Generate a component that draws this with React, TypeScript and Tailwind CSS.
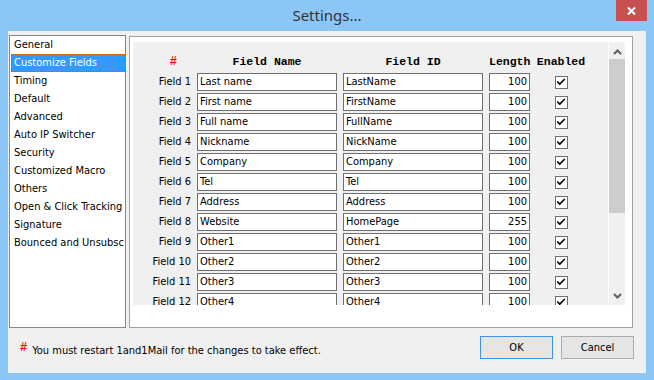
import { Check } from 'lucide-react'

const menu = [
  'General',
  'Customize Fields',
  'Timing',
  'Default',
  'Advanced',
  'Auto IP Switcher',
  'Security',
  'Customized Macro',
  'Others',
  'Open & Click Tracking',
  'Signature',
  'Bounced and Unsubscribe',
]

const fields = [
  ['Last name', 'LastName', '100'],
  ['First name', 'FirstName', '100'],
  ['Full name', 'FullName', '100'],
  ['Nickname', 'NickName', '100'],
  ['Company', 'Company', '100'],
  ['Tel', 'Tel', '100'],
  ['Address', 'Address', '100'],
  ['Website', 'HomePage', '255'],
  ['Other1', 'Other1', '100'],
  ['Other2', 'Other2', '100'],
  ['Other3', 'Other3', '100'],
  ['Other4', 'Other4', '100'],
]

const ui = "font-['DejaVu_Sans_Condensed','Liberation_Sans',sans-serif]"
const head = "font-['Liberation_Mono',monospace] font-bold text-[11.5px] text-black"

function Box({ value, right }: { value: string; right?: boolean }) {
  return (
    <div
      className={`h-[18px] border border-[#6f6f6f] bg-white px-[2px] text-[11px] leading-[16px] text-black whitespace-nowrap overflow-hidden ${
        right ? 'text-right' : ''
      }`}
    >
      {value}
    </div>
  )
}

export default function App() {
  return (
    <div className={`w-[654px] h-[380px] bg-[#8cc6f7] flex flex-col ${ui}`}>
      <div className="relative h-[31px] flex items-center justify-center">
        <span className="font-['Noto_Sans',sans-serif] text-[15px] text-[#333] -mt-[1px]">
          Settings...
        </span>
        <div className="absolute right-[7px] top-0 w-[31px] h-[21px] bg-[#c75050] flex items-center justify-center">
          <svg width="9" height="8" viewBox="0 0 9 8">
            <path d="M1 0.5 L8 7.5 M8 0.5 L1 7.5" stroke="white" strokeWidth="2" />
          </svg>
        </div>
      </div>

      <div className="mx-[8px] h-[342px] bg-[#f0f0f0] flex flex-col">
        <div className="flex pt-[4px] pl-[1px] gap-[3px]">
          <div className="w-[117px] h-[293px] bg-white border border-[#828790] pl-px overflow-hidden">
            {menu.map((m, i) => (
              <div
                key={m}
                className={`h-[18px] pl-[2px] text-[11px] leading-[16px] whitespace-nowrap overflow-hidden border ${
                  i === 1
                    ? 'bg-[#3399ff] text-white border-dotted border-[#c8620a]'
                    : 'text-black border-transparent'
                }`}
              >
                {m}
              </div>
            ))}
          </div>

          <div className="mt-[1px] w-[504px] h-[292px] bg-white border border-[#a0a0a0] pt-[5px] pl-[3px]">
            <div className="w-[492px] h-[263px] bg-[#f0f0f0] flex">
              <div className="flex-1 overflow-hidden pt-[10px]">
                <div className="flex items-center h-[19px] mb-[2px]">
                  <div className="w-[58px] text-right pr-[14px] text-[#ff0000] font-['Liberation_Mono',monospace] font-bold text-[12px]">
                    #
                  </div>
                  <div className={`ml-[6px] w-[140px] text-center ${head}`}>Field Name</div>
                  <div className={`ml-[6px] w-[140px] text-center ${head}`}>Field ID</div>
                  <div className={`ml-[6px] w-[41px] text-center ${head}`}>Length</div>
                  <div className={`ml-[2px] w-[58px] text-center ${head}`}>Enabled</div>
                </div>
                {fields.map((f, i) => (
                  <div key={i} className="flex items-center h-[18px] mb-[2px]">
                    <div className="w-[58px] text-right text-[11px] text-black whitespace-nowrap">
                      Field {i + 1}
                    </div>
                    <div className="ml-[6px] w-[140px]">
                      <Box value={f[0]} />
                    </div>
                    <div className="ml-[6px] w-[140px]">
                      <Box value={f[1]} />
                    </div>
                    <div className="ml-[6px] w-[41px]">
                      <Box value={f[2]} right />
                    </div>
                    <div className="ml-[2px] w-[58px] flex justify-center">
                      <div className="w-[13px] h-[13px] border border-[#707070] bg-white flex items-center justify-center">
                        <Check size={10} strokeWidth={4} className="text-black" />
                      </div>
                    </div>
                  </div>
                ))}
              </div>
              <div className="w-[17px] border-l border-white bg-[#f0f0f0] flex flex-col items-center">
                <svg width="9" height="6" viewBox="0 0 9 6" className="mt-[7px]">
                  <path d="M1 5 L4.5 1.5 L8 5" stroke="#606060" strokeWidth="2" fill="none" />
                </svg>
                <div className="mt-[4px] w-[16px] h-[154px] bg-[#cdcdcd]" />
                <div className="flex-1" />
                <svg width="9" height="6" viewBox="0 0 9 6" className="mb-[6px]">
                  <path d="M1 1 L4.5 4.5 L8 1" stroke="#606060" strokeWidth="2" fill="none" />
                </svg>
              </div>
            </div>
          </div>
        </div>

        <div className="flex items-center mt-[8px] pr-[12px]">
          <span className="ml-[12px] text-[#ff0000] font-['Liberation_Mono',monospace] font-bold text-[12px]">
            #
          </span>
          <span className="ml-[5px] mt-[7px] text-[11px] text-black">
            You must restart 1and1Mail for the changes to take effect.
          </span>
          <div className="flex-1" />
          <button className="w-[73px] h-[23px] border border-[#3c95e8] bg-[#e5e5e5] text-[11px] text-black">
            OK
          </button>
          <button className="ml-[8px] w-[73px] h-[23px] border border-[#acacac] bg-[#e5e5e5] text-[11px] text-black">
            Cancel
          </button>
        </div>
      </div>
    </div>
  )
}
